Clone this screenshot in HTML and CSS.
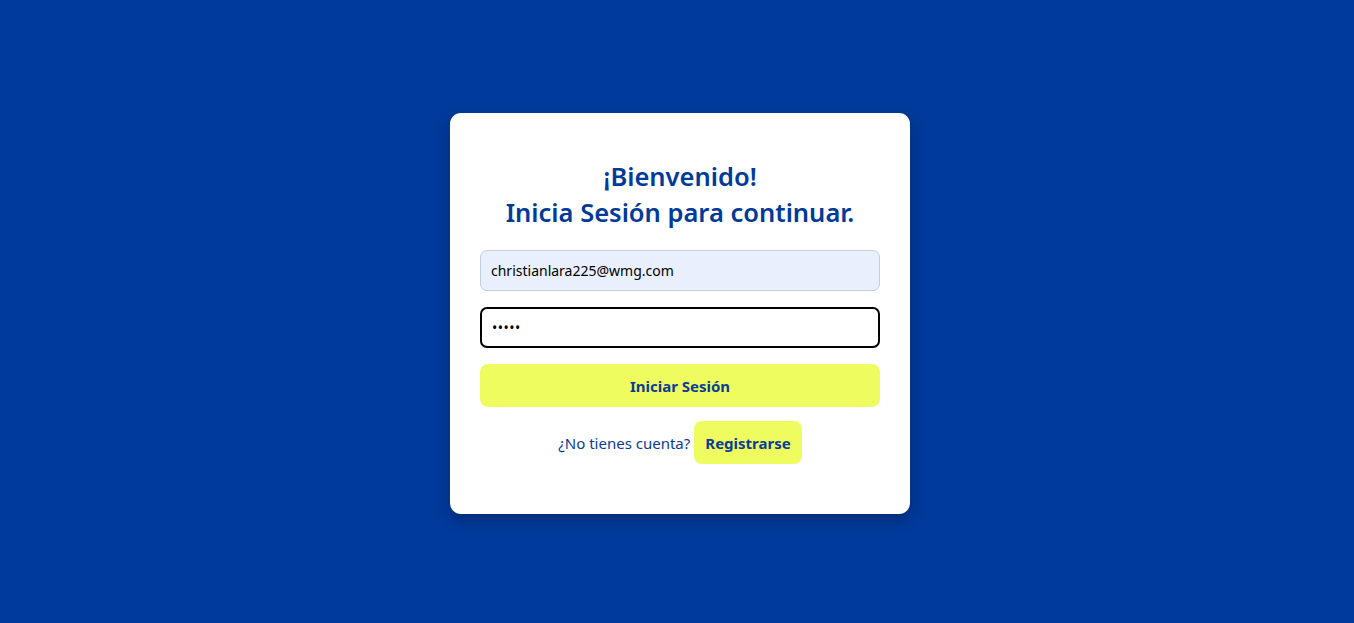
FILE: index.html
```html
<!DOCTYPE html>
<html lang="es">
<head>
<meta charset="utf-8">
<title>Iniciar Sesión</title>
<link rel="stylesheet" href="styles.css">
</head>
<body>
<main class="page">
  <form class="card" onsubmit="return false">
    <h2 class="title">¡Bienvenido!<br>Inicia Sesión para continuar.</h2>
    <input class="field field-filled" type="email" value="christianlara225@wmg.com">
    <input class="field field-focus" type="password" value="12345">
    <button class="btn-primary" type="submit">Iniciar Sesión</button>
    <div class="register">
      <span class="register-text">¿No tienes cuenta?</span>
      <button class="btn-register" type="button">Registrarse</button>
    </div>
  </form>
</main>
</body>
</html>
```
FILE: styles.css
```css
* { box-sizing: border-box; }
html, body {
  margin: 0;
  height: 100%;
}
body {
  background: #003a9a;
  font-family: "Noto Sans", "DejaVu Sans", sans-serif;
}
.page {
  height: 100%;
  padding: 4px 0 0 6px;
  display: flex;
  align-items: center;
  justify-content: center;
}
.card {
  width: 460px;
  background: #ffffff;
  border-radius: 11px;
  padding: 45px 30px 50px;
  display: flex;
  flex-direction: column;
  box-shadow: 0 6px 14px rgba(0, 0, 20, 0.25);
}
.title {
  margin: 0 0 20px;
  text-align: center;
  color: #003a9a;
  font-size: 25.5px;
  line-height: 36px;
  font-weight: 600;
}
.field {
  width: 100%;
  height: 41px;
  border-radius: 7px;
  padding: 0 10px;
  font-family: inherit;
  font-size: 14px;
  color: #000;
  outline: none;
}
.field-filled {
  background: #e8f0fe;
  border: 1px solid #c5cdd8;
  margin-bottom: 16px;
}
.field-focus {
  background: #fff;
  border: 2px solid #000;
  margin-bottom: 16px;
  font-size: 14px;
  letter-spacing: 0.5px;
}
.btn-primary {
  height: 43px;
  border: none;
  border-radius: 8px;
  background: #eefc60;
  color: #0b3c95;
  font-family: inherit;
  font-size: 15px;
  font-weight: 700;
  cursor: pointer;
}
.register {
  margin-top: 14px;
  display: flex;
  align-items: center;
  justify-content: center;
  gap: 4px;
}
.register-text {
  color: #0b3c95;
  font-size: 15px;
}
.btn-register {
  height: 43px;
  padding: 0 11px;
  border: none;
  border-radius: 8px;
  background: #eefc60;
  color: #0b3c95;
  font-family: inherit;
  font-size: 15px;
  font-weight: 700;
  cursor: pointer;
}
```
